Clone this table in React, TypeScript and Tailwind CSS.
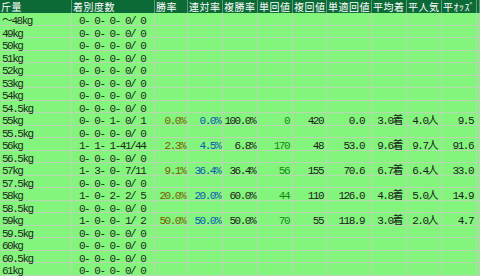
import React from 'react';

type Row = {
  kg: string;
  rec: string;
  s?: string[];
};

const heads = ['斤量', '着別度数', '勝率', '連対率', '複勝率', '単回値', '複回値', '単適回値', '平均着', '平人気', '平ｵｯｽﾞ', ''];

const z = '0- 0- 0- 0/ 0';

const rows: Row[] = [
  { kg: '～48kg', rec: z },
  { kg: '49kg', rec: z },
  { kg: '50kg', rec: z },
  { kg: '51kg', rec: z },
  { kg: '52kg', rec: z },
  { kg: '53kg', rec: z },
  { kg: '54kg', rec: z },
  { kg: '54.5kg', rec: z },
  { kg: '55kg', rec: '0- 0- 1- 0/ 1', s: ['0.0%', '0.0%', '100.0%', '0', '420', '0.0', '3.0着', '4.0人', '9.5'] },
  { kg: '55.5kg', rec: z },
  { kg: '56kg', rec: '1- 1- 1-41/44', s: ['2.3%', '4.5%', '6.8%', '170', '48', '53.0', '9.6着', '9.7人', '91.6'] },
  { kg: '56.5kg', rec: z },
  { kg: '57kg', rec: '1- 3- 0- 7/11', s: ['9.1%', '36.4%', '36.4%', '56', '155', '70.6', '6.7着', '6.4人', '33.0'] },
  { kg: '57.5kg', rec: z },
  { kg: '58kg', rec: '1- 0- 2- 2/ 5', s: ['20.0%', '20.0%', '60.0%', '44', '110', '126.0', '4.8着', '5.0人', '14.9'] },
  { kg: '58.5kg', rec: z },
  { kg: '59kg', rec: '1- 0- 0- 1/ 2', s: ['50.0%', '50.0%', '50.0%', '70', '55', '118.9', '3.0着', '2.0人', '4.7'] },
  { kg: '59.5kg', rec: z },
  { kg: '60kg', rec: z },
  { kg: '60.5kg', rec: z },
  { kg: '61kg', rec: z },
];

// colour + right padding for each stats column
const statCls = [
  'text-[#7a5a00] pr-[2px]',
  'text-[#0a58b8] pr-[2px]',
  'text-[#1c1c1c] pr-[2px]',
  'text-[#12881a] pr-[3px]',
  'text-[#1c1c1c] pr-[3px]',
  'text-[#1c1c1c] pr-[7px]',
  'text-[#1c1c1c] pr-[4px]',
  'text-[#1c1c1c] pr-[4px]',
  'text-[#1c1c1c] pr-[3px]',
];

const grid = 'grid grid-cols-[72px_83px_33px_35px_35px_35px_34px_45px_35px_35px_35px_3px]';
const mono = "font-['Liberation_Mono','Noto_Sans_CJK_JP',monospace] text-[11px] tracking-[-1.5px] whitespace-pre";

export default function App() {
  return (
    <div className="w-[480px] h-[276px] overflow-hidden bg-[#84f57c]">
      <div className={`${grid} h-[13px] bg-[#0b6a35] text-white font-['Noto_Sans_CJK_JP',sans-serif] text-[10px] leading-[13px]`}>
        {heads.map((h, i) => (
          <div key={i} className="flex items-center border-r border-[#5f9c74] pl-[1px] whitespace-nowrap">
            <span className="tracking-[0.5px]">{h}</span>
          </div>
        ))}
      </div>
      {rows.map((r, i) => (
        <div
          key={r.kg}
          className={`${grid} ${i % 2 === 0 ? 'h-[13px]' : 'h-[12px]'} border-b border-[#b9d6b3] ${mono} text-[#1c2a1c] items-center`}
        >
          <div className="h-full flex items-center pl-[2px] border-r border-[#b9d6b3]">{r.kg}</div>
          <div className="h-full flex items-center pl-[7px] border-r border-[#b9d6b3]">{r.rec}</div>
          {Array.from({ length: 9 }).map((_, j) => (
            <div
              key={j}
              className={`h-full flex items-center justify-end border-r border-[#b9d6b3] ${statCls[j]}`}
            >
              {r.s ? r.s[j] : ''}
            </div>
          ))}
          <div className="h-full border-r border-[#b9d6b3]" />
        </div>
      ))}
    </div>
  );
}
